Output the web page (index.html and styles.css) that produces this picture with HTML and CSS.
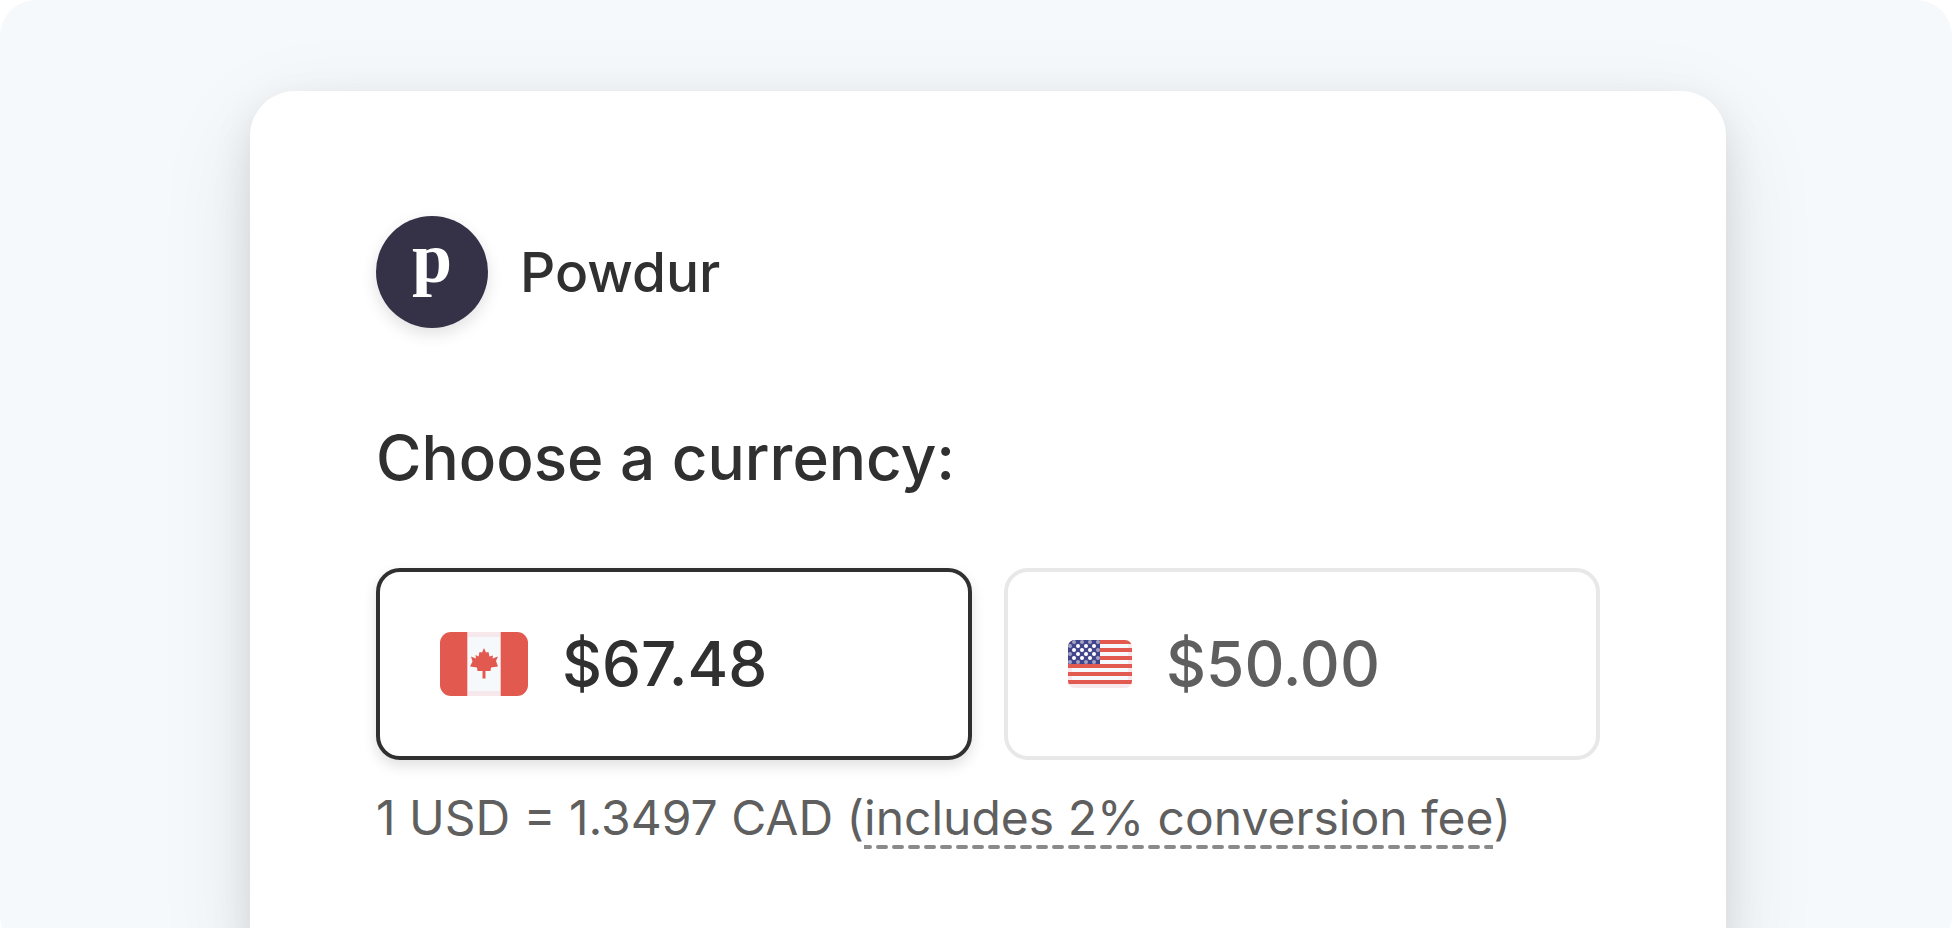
FILE: index.html
```html
<!DOCTYPE html>
<html lang="en">
<head>
<meta charset="utf-8">
<meta name="viewport" content="width=device-width, initial-scale=1">
<title>Powdur checkout</title>
<link rel="stylesheet" href="styles.css">
</head>
<body>
<div class="stage">
  <main class="card">
    <header class="brand">
      <span class="brand-mark" aria-hidden="true">p</span>
      <span class="brand-name">Powdur</span>
    </header>
    <h1 class="title" id="currency-title">Choose a currency:</h1>
    <div class="options" role="group" aria-labelledby="currency-title">
      <button class="option option-selected" type="button" aria-pressed="true">
        <svg class="flag flag-large" viewBox="0 0 88 64" role="img" aria-label="Canada">
          <clipPath id="ca"><rect width="88" height="64" rx="11"/></clipPath>
          <g clip-path="url(#ca)">
            <rect width="88" height="64" fill="#f5f9fc"/>
            <path d="M27 0h34v5H27zM27 59h34v5H27z" fill="#f6e8eb"/>
            <path d="M0 0h27v64H0zM61 0h27v64H61z" fill="#e25950"/>
            <path d="M27 0h1v64h-1zM60 0h1v64h-1z" fill="#f3c4c3"/>
            <path d="M44 16L46 20.500L48.500 20L49.500 24.500L53 23.500L52.500 26.500L58 24.500L56 29L58 34.500L51 35.500L50.500 39H45.500V46.500H42.500V39H37.500L37 35.500L30 34.500L32.500 29.500L31 24.500L36 26.500L35.500 23L38.500 24.500L39.500 20L42 20.500Z" fill="#e25950"/>
          </g>
        </svg>
        <span class="amount">$67.48</span>
      </button>
      <button class="option" type="button" aria-pressed="false">
        <svg class="flag flag-small" viewBox="0 0 64 48" role="img" aria-label="United States">
          <defs>
            <clipPath id="us"><rect width="64" height="48" rx="7"/></clipPath>
            <pattern id="stars" width="8" height="8" patternUnits="userSpaceOnUse">
              <circle cx="2" cy="6" r="2" fill="#fff"/><circle cx="6" cy="2" r="2" fill="#fff"/>
            </pattern>
          </defs>
          <g clip-path="url(#us)">
            <rect width="64" height="48" fill="#f5f9fc"/>
            <path d="M0 0h4v48H0zM60 0h4v48h-4zM0 44h64v4H0z" fill="#f6e8eb"/>
            <path d="M0 0h64v4H0zM0 8h64v4H0zM0 16h64v4H0zM0 24h64v4H0zM0 32h64v4H0zM0 40h64v4H0z" fill="#e25950"/>
            <path d="M0 0h32v24H0z" fill="#43458b"/>
            <path d="M0 0h32v24H0z" fill="url(#stars)"/>
            <path d="M0 0h32v24H0zM4 4v16h24V4z" fill="#43458b" fill-opacity=".5" fill-rule="evenodd"/>
          </g>
        </svg>
        <span class="amount">$50.00</span>
      </button>
    </div>
    <p class="rate">1 USD = 1.3497 CAD (<span class="fee">includes 2% conversion fee<svg class="fee-line" aria-hidden="true"><line x1="-2" y1="2" x2="100%" y2="2"/></svg></span>)</p>
  </main>
</div>
</body>
</html>
```
FILE: styles.css
```css
* {
  box-sizing: border-box;
}

body {
  height: 100vh;
  margin: 0;
  overflow: hidden;
  background: #fff;
  color: #303030;
  font-family: Inter, "Liberation Sans", sans-serif;
}

/* The panel runs on a little below the fold. */
.stage {
  display: flex;
  min-height: calc(100vh + 24px);
  padding: 91px 226px 0 250px;
  border-radius: 36px;
  background: #f5f9fc;
  overflow: hidden;
}

.card {
  flex: 1;
  padding: 125px 126px 64px;
  border-radius: 45px 45px 0 0;
  background: #fff;
  box-shadow: 0 30px 100px rgba(0, 0, 0, 0.09), 0 16px 40px rgba(0, 0, 0, 0.1);
}

.brand {
  display: flex;
  align-items: center;
  gap: 32px;
}

.brand-mark {
  width: 112px;
  height: 112px;
  border-radius: 50%;
  background: #353147;
  box-shadow: 0 6px 16px rgba(0, 0, 0, 0.12);
  color: #fff;
  font: bold 72px/84px "Liberation Serif", serif;
  text-align: center;
}

.brand-name {
  font-size: 55px;
  font-weight: 500;
  line-height: 64px;
}

.title {
  margin: 88px 0 68px;
  font-size: 62px;
  font-weight: 500;
  line-height: 84px;
}

.options {
  display: grid;
  grid-template-columns: 1fr 1fr;
  gap: 32px;
}

.option {
  display: flex;
  align-items: center;
  gap: 34px;
  height: 192px;
  padding: 0 60px;
  border: 4px solid #e8e8e8;
  border-radius: 24px;
  background: #fff;
  color: #5f5f5f;
  font: 500 62px/80px Inter, "Liberation Sans", sans-serif;
  text-align: left;
}

.option-selected {
  border-color: #303030;
  color: #303030;
  box-shadow: 0 6px 14px rgba(0, 0, 0, 0.12);
}

.flag {
  flex: none;
}

.flag-large {
  width: 88px;
  height: 64px;
}

.flag-small {
  width: 64px;
  height: 48px;
}

.rate {
  margin: 26px 0 0;
  color: #5f5f5f;
  font-size: 48px;
  line-height: 64px;
  white-space: nowrap;
}

.fee {
  position: relative;
}

.fee-line {
  position: absolute;
  bottom: -2px;
  left: 0;
  width: 100%;
  height: 4px;
  stroke: #8a8a8a;
  stroke-width: 4;
  stroke-linecap: round;
  stroke-dasharray: 8 8;
}
```
